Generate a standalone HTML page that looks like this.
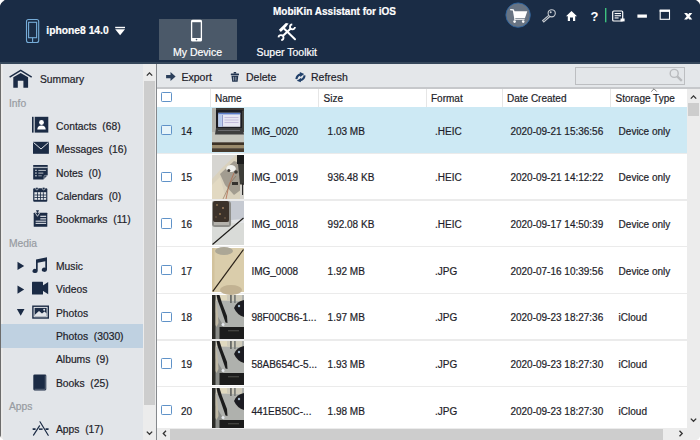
<!DOCTYPE html>
<html><head><meta charset="utf-8">
<style>
*{margin:0;padding:0;box-sizing:border-box}
html,body{width:700px;height:440px;overflow:hidden;background:#fff}
body{font-family:"Liberation Sans",sans-serif;font-size:10px;color:#1e1e2a;position:relative}
.a{position:absolute}
.t{position:absolute;white-space:pre;line-height:1;-webkit-text-stroke:0.2px currentColor}
svg{position:absolute;overflow:visible}
</style></head><body>
<!-- header -->
<div class="a" style="left:0;top:0;width:700px;height:62px;background:#1a2c45"></div>
<div class="a" style="left:0;top:62px;width:700px;height:2px;background:#35475b"></div>
<div class="t" style="left:273px;top:7px;color:#fff;font-weight:bold;font-size:10px">MobiKin Assistant for iOS</div>
<div class="t" style="left:46.3px;top:26.3px;color:#fff;font-weight:bold;font-size:10.3px">iphone8 14.0</div>
<div class="a" style="left:158.7px;top:18.7px;width:78.3px;height:41.3px;background:#4b5969"></div>
<div class="t" style="left:173px;top:47px;color:#fff;font-size:10.5px">My Device</div>
<div class="t" style="left:256.5px;top:47px;color:#fff;font-size:10.5px">Super Toolkit</div>

<!-- sidebar -->
<div class="a" style="left:0;top:64px;width:143px;height:376px;background:#e2e5e9"></div>
<div class="a" style="left:1px;top:64px;width:2px;height:376px;background:#eaeaea"></div>
<div class="a" style="left:0;top:64px;width:1.2px;height:376px;background:#6c6c6c"></div>
<div class="a" style="left:143px;top:64px;width:13px;height:376px;background:#ececec"></div>
<div class="a" style="left:144px;top:81px;width:11px;height:324px;background:#cdcdcd"></div>
<div class="a" style="left:156px;top:64px;width:1.3px;height:376px;background:#85888c"></div>

<div class="t" style="left:40px;top:75.33px;font-size:10.3px">Summary</div>
<div class="t" style="left:9px;top:98.67px;font-size:10.3px;color:#979ba1">Info</div>
<div class="t" style="left:56px;top:122.00px;font-size:10.3px">Contacts  (68)</div>
<div class="t" style="left:56px;top:145.33px;font-size:10.3px">Messages  (16)</div>
<div class="t" style="left:56px;top:168.67px;font-size:10.3px">Notes  (0)</div>
<div class="t" style="left:56px;top:192.00px;font-size:10.3px">Calendars  (0)</div>
<div class="t" style="left:56px;top:215.33px;font-size:10.3px">Bookmarks  (11)</div>
<div class="t" style="left:9px;top:238.66px;font-size:10.3px;color:#979ba1">Media</div>
<div class="t" style="left:56px;top:262.00px;font-size:10.3px">Music</div>
<div class="t" style="left:56px;top:285.33px;font-size:10.3px">Videos</div>
<div class="t" style="left:56px;top:308.66px;font-size:10.3px">Photos</div>
<div class="a" style="left:1.2px;top:323.7px;width:141.8px;height:24px;background:#bfd1e1"></div>
<div class="t" style="left:56px;top:332.00px;font-size:10.3px">Photos  (3030)</div>
<div class="t" style="left:56px;top:355.33px;font-size:10.3px">Albums  (9)</div>
<div class="t" style="left:56px;top:378.66px;font-size:10.3px">Books  (25)</div>
<div class="t" style="left:9px;top:402.00px;font-size:10.3px;color:#979ba1">Apps</div>
<div class="t" style="left:56px;top:425.33px;font-size:10.3px">Apps  (17)</div>

<!-- toolbar -->
<div class="a" style="left:157px;top:64px;width:543px;height:23.5px;background:#e4e7ea"></div>
<div class="a" style="left:157px;top:87px;width:543px;height:1.5px;background:#c6c8cb"></div>
<div class="t" style="left:181.5px;top:71.5px;font-size:10.5px">Export</div>
<div class="t" style="left:246px;top:71.5px;font-size:10.5px">Delete</div>
<div class="t" style="left:311px;top:71.5px;font-size:10.5px">Refresh</div>
<div class="a" style="left:575px;top:66.5px;width:110px;height:18px;border:1px solid #bcbec1;background:#e3e6e9"></div>

<!-- grid -->
<div class="a" style="left:157px;top:88.5px;width:530px;height:339.5px;background:#fff"></div>
<svg width="0" height="0" style="position:absolute"><defs><filter id="bl" x="0" y="0" width="1" height="1"><feGaussianBlur stdDeviation="0.5"/></filter></defs></svg>
<div class="a" style="left:157px;top:107.33px;width:530px;height:45.37px;background:#cde9f4"></div>
<div class="a" style="left:157px;top:152.70px;width:530px;height:1.3px;background:#ebebeb"></div>
<div class="a" style="left:161px;top:124.83px;width:11px;height:10.4px;border:1.3px solid #5f92c8;border-radius:1.3px;background:rgba(255,255,255,0.5)"></div>
<div class="t" style="left:181px;top:126.63px">14</div>
<svg style="left:212px;top:108.13px" width="32" height="44" viewBox="0 0 32 44"><g filter="url(#bl)"><rect width="32" height="44" fill="#5e5d58"/>
<rect x="0" y="0" width="5" height="26" fill="#b2b1aa"/>
<rect x="4" y="0" width="28" height="3" fill="#3a3936"/>
<rect x="4" y="2" width="26.5" height="19" fill="#1e1e22"/>
<rect x="6.3" y="4.8" width="22" height="14" fill="#e6e6f2"/>
<rect x="6.3" y="4.8" width="22" height="1.6" fill="#5a7cc8"/>
<rect x="6.3" y="6.4" width="3.5" height="12.4" fill="#b4c8ec"/>
<rect x="10" y="7" width="0.7" height="11.5" fill="#6a78b8"/>
<rect x="12.5" y="9" width="14" height="1" fill="#c4bcdc"/>
<rect x="12.5" y="11.5" width="14" height="1" fill="#c4bcdc"/>
<rect x="12.5" y="14" width="14" height="1" fill="#c4bcdc"/>
<rect x="30.5" y="3" width="1.5" height="22" fill="#44443f"/>
<rect x="0" y="24" width="32" height="10.5" fill="#c6c6be"/>
<polygon points="4,20 30.5,20 32,26.5 3,26.5" fill="#3c3c3e"/>
<rect x="6" y="22" width="22" height="1" fill="#6a6a6e"/>
<rect x="0" y="34.5" width="32" height="2.5" fill="#3d3228"/>
<rect x="0" y="37" width="32" height="3.5" fill="#9a8a6c"/>
<rect x="0" y="40.5" width="32" height="3.5" fill="#463a2e"/></g></svg>
<div class="t" style="left:251.4px;top:126.63px">IMG_0020</div>
<div class="t" style="left:327.6px;top:126.63px">1.03 MB</div>
<div class="t" style="left:435px;top:126.63px">.HEIC</div>
<div class="t" style="left:510.4px;top:126.63px">2020-09-21 15:36:56</div>
<div class="t" style="left:618.6px;top:126.63px">Device only</div>
<div class="a" style="left:157px;top:199.37px;width:530px;height:1.3px;background:#ebebeb"></div>
<div class="a" style="left:161px;top:171.50px;width:11px;height:10.4px;border:1.3px solid #5f92c8;border-radius:1.3px;background:rgba(255,255,255,0.5)"></div>
<div class="t" style="left:181px;top:173.30px">15</div>
<svg style="left:212px;top:154.80px" width="32" height="44" viewBox="0 0 32 44"><g filter="url(#bl)"><rect width="32" height="44" fill="#d9d1bd"/>
<polygon points="0,0 24,0 10,13 0,24" fill="#d6d5d1"/>
<polygon points="8,19 22,6 28,8 30,34 22,40 13,30" fill="#a29c90"/>
<polygon points="0,30 8,22 14,44 0,44" fill="#e2d9c2"/>
<ellipse cx="19" cy="13.5" rx="4.8" ry="3.6" fill="#f1f1ed"/>
<circle cx="16.8" cy="15.5" r="1.5" fill="#3c3834"/>
<circle cx="24" cy="17" r="1.8" fill="#403c38"/>
<rect x="25" y="0" width="7" height="9" fill="#1e1d1c"/>
<polygon points="26,9 32,9 32,30 28,29" fill="#3e3c39"/>
<rect x="28" y="30" width="4" height="14" fill="#d6d4ce"/>
<rect x="30" y="28" width="1.1" height="12" fill="#2a2a2a"/>
<rect x="20" y="27" width="6" height="3" fill="#34322f"/>
<path d="M14,44 L17,30 L22,18" stroke="#b46a4e" stroke-width="0.8" fill="none"/>
<path d="M11,44 L19,27 L24,21" stroke="#8a6a50" stroke-width="0.6" fill="none"/></g></svg>
<div class="t" style="left:251.4px;top:173.30px">IMG_0019</div>
<div class="t" style="left:327.6px;top:173.30px">936.48 KB</div>
<div class="t" style="left:435px;top:173.30px">.HEIC</div>
<div class="t" style="left:510.4px;top:173.30px">2020-09-21 14:12:22</div>
<div class="t" style="left:618.6px;top:173.30px">Device only</div>
<div class="a" style="left:157px;top:246.03px;width:530px;height:1.3px;background:#ebebeb"></div>
<div class="a" style="left:161px;top:218.17px;width:11px;height:10.4px;border:1.3px solid #5f92c8;border-radius:1.3px;background:rgba(255,255,255,0.5)"></div>
<div class="t" style="left:181px;top:219.97px">16</div>
<svg style="left:212px;top:201.47px" width="32" height="44" viewBox="0 0 32 44"><g filter="url(#bl)"><rect width="32" height="44" fill="#d9dbd8"/>
<rect x="16" y="0" width="16" height="21" fill="#c6cad2"/>
<rect x="0" y="0" width="19" height="26" rx="3" fill="#8e8e8a"/>
<rect x="1" y="0" width="16" height="21" rx="2" fill="#3a3029"/>
<circle cx="5" cy="4" r="1" fill="#8a7050"/><circle cx="11" cy="7" r="1" fill="#a08060"/><circle cx="8" cy="13" r="1" fill="#9a7a58"/><circle cx="13" cy="17" r="0.8" fill="#8a7050"/><circle cx="4" cy="16" r="0.8" fill="#7a6048"/>
<rect x="2" y="21" width="15" height="3" fill="#b4b2ac"/>
<polygon points="19,19 32,18 32,22 20,22" fill="#e2e4e6"/>
<line x1="0.5" y1="43.5" x2="31.5" y2="17" stroke="#1a1816" stroke-width="1.1"/></g></svg>
<div class="t" style="left:251.4px;top:219.97px">IMG_0018</div>
<div class="t" style="left:327.6px;top:219.97px">992.08 KB</div>
<div class="t" style="left:435px;top:219.97px">.HEIC</div>
<div class="t" style="left:510.4px;top:219.97px">2020-09-17 14:50:39</div>
<div class="t" style="left:618.6px;top:219.97px">Device only</div>
<div class="a" style="left:157px;top:292.70px;width:530px;height:1.3px;background:#ebebeb"></div>
<div class="a" style="left:161px;top:264.83px;width:11px;height:10.4px;border:1.3px solid #5f92c8;border-radius:1.3px;background:rgba(255,255,255,0.5)"></div>
<div class="t" style="left:181px;top:266.63px">17</div>
<svg style="left:212px;top:248.13px" width="32" height="44" viewBox="0 0 32 44"><g filter="url(#bl)"><rect width="32" height="44" fill="#dacdab"/>
<ellipse cx="12" cy="3" rx="9" ry="4" fill="#aca796"/>
<ellipse cx="19" cy="42" rx="11" ry="5" fill="#c2b292"/>
<rect x="0" y="0" width="2.5" height="44" fill="#d2c29c"/>
<line x1="0.8" y1="43.3" x2="31.5" y2="1.5" stroke="#2a2218" stroke-width="1.2"/></g></svg>
<div class="t" style="left:251.4px;top:266.63px">IMG_0008</div>
<div class="t" style="left:327.6px;top:266.63px">1.92 MB</div>
<div class="t" style="left:435px;top:266.63px">.JPG</div>
<div class="t" style="left:510.4px;top:266.63px">2020-07-16 10:39:56</div>
<div class="t" style="left:618.6px;top:266.63px">Device only</div>
<div class="a" style="left:157px;top:339.37px;width:530px;height:1.3px;background:#ebebeb"></div>
<div class="a" style="left:161px;top:311.50px;width:11px;height:10.4px;border:1.3px solid #5f92c8;border-radius:1.3px;background:rgba(255,255,255,0.5)"></div>
<div class="t" style="left:181px;top:313.30px">18</div>
<svg style="left:212px;top:294.80px" width="32" height="44" viewBox="0 0 32 44"><g filter="url(#bl)"><rect width="32" height="44" fill="#afb1ad"/>
<polygon points="0,12 11,30 9,44 0,44" fill="#8a8c88"/>
<rect x="4" y="0" width="26" height="6" fill="#cfcbbb"/>
<rect x="7" y="0" width="8" height="5" fill="#e0d9bf"/>
<rect x="18" y="0" width="1.8" height="8" fill="#6a6c68"/>
<rect x="22" y="0" width="1.8" height="8" fill="#7e807c"/>
<rect x="0" y="0" width="3.5" height="44" fill="#2a2a28"/>
<polygon points="3.5,4 5.5,14 6.5,28 4.5,32 3.5,30" fill="#c0b9a4"/>
<polygon points="4.5,0 7.5,0 10,8 15,21 15.5,28 13.5,27.5 8.5,13 5.5,5" fill="#1e1e1e"/>
<path d="M22,13 Q25,6 32,5 L32,22 Q25,20 22,13 Z" fill="#1e1e20"/>
<circle cx="27" cy="11" r="1.2" fill="#a4b8cc"/>
<rect x="7.5" y="32" width="24.5" height="12" fill="#1c1c1a"/>
<rect x="16" y="35" width="11" height="1.4" fill="#42423f"/>
<circle cx="11" cy="29.5" r="1.5" fill="#e6e9ee"/></g></svg>
<div class="t" style="left:251.4px;top:313.30px">98F00CB6-1...</div>
<div class="t" style="left:327.6px;top:313.30px">1.97 MB</div>
<div class="t" style="left:435px;top:313.30px">.JPG</div>
<div class="t" style="left:510.4px;top:313.30px">2020-09-23 18:27:36</div>
<div class="t" style="left:618.6px;top:313.30px">iCloud</div>
<div class="a" style="left:157px;top:386.03px;width:530px;height:1.3px;background:#ebebeb"></div>
<div class="a" style="left:161px;top:358.17px;width:11px;height:10.4px;border:1.3px solid #5f92c8;border-radius:1.3px;background:rgba(255,255,255,0.5)"></div>
<div class="t" style="left:181px;top:359.97px">19</div>
<svg style="left:212px;top:341.47px" width="32" height="44" viewBox="0 0 32 44"><g filter="url(#bl)"><rect width="32" height="44" fill="#afb1ad"/>
<polygon points="0,12 11,30 9,44 0,44" fill="#8a8c88"/>
<rect x="4" y="0" width="26" height="6" fill="#cfcbbb"/>
<rect x="7" y="0" width="8" height="5" fill="#e0d9bf"/>
<rect x="18" y="0" width="1.8" height="8" fill="#6a6c68"/>
<rect x="22" y="0" width="1.8" height="8" fill="#7e807c"/>
<rect x="0" y="0" width="3.5" height="44" fill="#2a2a28"/>
<polygon points="3.5,4 5.5,14 6.5,28 4.5,32 3.5,30" fill="#c0b9a4"/>
<polygon points="4.5,0 7.5,0 10,8 15,21 15.5,28 13.5,27.5 8.5,13 5.5,5" fill="#1e1e1e"/>
<path d="M22,13 Q25,6 32,5 L32,22 Q25,20 22,13 Z" fill="#1e1e20"/>
<circle cx="27" cy="11" r="1.2" fill="#a4b8cc"/>
<rect x="7.5" y="32" width="24.5" height="12" fill="#1c1c1a"/>
<rect x="16" y="35" width="11" height="1.4" fill="#42423f"/>
<circle cx="11" cy="29.5" r="1.5" fill="#e6e9ee"/></g></svg>
<div class="t" style="left:251.4px;top:359.97px">58AB654C-5...</div>
<div class="t" style="left:327.6px;top:359.97px">1.93 MB</div>
<div class="t" style="left:435px;top:359.97px">.JPG</div>
<div class="t" style="left:510.4px;top:359.97px">2020-09-23 18:27:30</div>
<div class="t" style="left:618.6px;top:359.97px">iCloud</div>
<div class="a" style="left:157px;top:432.70px;width:530px;height:1.3px;background:#ebebeb"></div>
<div class="a" style="left:161px;top:404.83px;width:11px;height:10.4px;border:1.3px solid #5f92c8;border-radius:1.3px;background:rgba(255,255,255,0.5)"></div>
<div class="t" style="left:181px;top:406.63px">20</div>
<svg style="left:212px;top:388.13px" width="32" height="44" viewBox="0 0 32 44"><g filter="url(#bl)"><rect width="32" height="44" fill="#afb1ad"/>
<polygon points="0,12 11,30 9,44 0,44" fill="#8a8c88"/>
<rect x="4" y="0" width="26" height="6" fill="#cfcbbb"/>
<rect x="7" y="0" width="8" height="5" fill="#e0d9bf"/>
<rect x="18" y="0" width="1.8" height="8" fill="#6a6c68"/>
<rect x="22" y="0" width="1.8" height="8" fill="#7e807c"/>
<rect x="0" y="0" width="3.5" height="44" fill="#2a2a28"/>
<polygon points="3.5,4 5.5,14 6.5,28 4.5,32 3.5,30" fill="#c0b9a4"/>
<polygon points="4.5,0 7.5,0 10,8 15,21 15.5,28 13.5,27.5 8.5,13 5.5,5" fill="#1e1e1e"/>
<path d="M22,13 Q25,6 32,5 L32,22 Q25,20 22,13 Z" fill="#1e1e20"/>
<circle cx="27" cy="11" r="1.2" fill="#a4b8cc"/>
<rect x="7.5" y="32" width="24.5" height="12" fill="#1c1c1a"/>
<rect x="16" y="35" width="11" height="1.4" fill="#42423f"/>
<circle cx="11" cy="29.5" r="1.5" fill="#e6e9ee"/></g></svg>
<div class="t" style="left:251.4px;top:406.63px">441EB50C-...</div>
<div class="t" style="left:327.6px;top:406.63px">1.98 MB</div>
<div class="t" style="left:435px;top:406.63px">.JPG</div>
<div class="t" style="left:510.4px;top:406.63px">2020-09-23 18:27:30</div>
<div class="t" style="left:618.6px;top:406.63px">iCloud</div>
<div class="a" style="left:161px;top:91.8px;width:11px;height:10.4px;border:1.3px solid #5f92c8;border-radius:1.3px"></div>
<div class="a" style="left:210px;top:88.5px;width:1px;height:18.5px;background:#e6e6e6"></div>
<div class="a" style="left:318px;top:88.5px;width:1px;height:18.5px;background:#e6e6e6"></div>
<div class="a" style="left:426px;top:88.5px;width:1px;height:18.5px;background:#e6e6e6"></div>
<div class="a" style="left:502px;top:88.5px;width:1px;height:18.5px;background:#e6e6e6"></div>
<div class="a" style="left:610px;top:88.5px;width:1px;height:18.5px;background:#e6e6e6"></div>
<div class="t" style="left:215px;top:93.8px;font-size:10px">Name</div>
<div class="t" style="left:323.5px;top:93.8px;font-size:10px">Size</div>
<div class="t" style="left:431px;top:93.8px;font-size:10px">Format</div>
<div class="t" style="left:507px;top:93.8px;font-size:10px">Date Created</div>
<div class="t" style="left:615.5px;top:93.8px;font-size:10px">Storage Type</div>

<!-- scrollbars -->
<div class="a" style="left:687px;top:88.5px;width:13px;height:351.5px;background:#ececec"></div>
<div class="a" style="left:688px;top:103px;width:11px;height:13px;background:#cdcdcd"></div>
<div class="a" style="left:157px;top:428px;width:530px;height:12px;background:#ececec"></div>
<div class="a" style="left:170px;top:429px;width:493px;height:11px;background:#cdcdcd"></div>
<svg width="700" height="440" viewBox="0 0 700 440" style="left:0;top:0;position:absolute">
<!-- device phone -->
<g fill="none" stroke="#76acd8" stroke-width="1.1">
<rect x="26.5" y="19.5" width="12.2" height="23" rx="2"/>
<rect x="28.6" y="22.3" width="8" height="15.4"/>
<line x1="32.6" y1="37.8" x2="32.6" y2="42"/>
</g>
<!-- dropdown triangle -->
<rect x="115.2" y="26.8" width="9.8" height="1.4" fill="#fff"/>
<polygon points="115.2,29.2 125,29.2 120.1,35.3" fill="#fff"/>
<!-- white phone tab -->
<rect x="191.6" y="20.5" width="9.8" height="20.4" rx="1" fill="none" stroke="#fff" stroke-width="1.3"/>
<rect x="191.6" y="20.5" width="9.8" height="1.7" fill="#fff"/>
<rect x="191.6" y="38" width="9.8" height="3" fill="#fff"/>
<circle cx="196.5" cy="39.6" r="0.8" fill="#4b5969"/>
<!-- tools -->
<g stroke="#fff" fill="none" stroke-width="2">
<line x1="284.5" y1="29" x2="295" y2="39.2" stroke-linecap="round"/>
<line x1="283" y1="35.8" x2="290.8" y2="28.4"/>
<path d="M294.99,27.02 A2.5,2.5 0 1 1 292.28,24.31" stroke-width="1.8"/>
<path d="M278.51,37.38 A2.5,2.5 0 1 1 281.22,40.09" stroke-width="1.8"/>
</g>
<polygon points="288.6,23.6 285.8,22.9 278.9,29.8 280.8,32.1 284,29 286.5,26.2" fill="#fff"/>
<!-- cart -->
<circle cx="518.1" cy="15.1" r="12.2" fill="#687483" stroke="#2c64a0" stroke-width="0.9"/>
<g fill="#fff">
<path d="M510.2,9.1 L513.6,9.3 L514.6,11.2 L527.3,11.2 L524.9,18.2 L515.3,18.2 L515.3,19.3 L524.6,19.3 L524.6,20.1 L514.3,20.1 L514.2,18.2 L512.8,10.4 L510.2,10.3 Z"/>
<circle cx="514.6" cy="21.6" r="1.3"/>
<circle cx="523.2" cy="21.6" r="1.3"/>
</g>
<!-- key -->
<g fill="none" stroke="#c9cdd2" stroke-width="1.1">
<circle cx="551.7" cy="13.3" r="3.6"/>
<path d="M548.7,15.3 L542.6,20.6 L543.8,22 L549.9,16.5"/>
</g>
<circle cx="550.7" cy="12.3" r="1" fill="#c9cdd2"/>
<!-- home -->
<g fill="#fff">
<polygon points="571.5,10.9 577,16.2 575.2,16.2 575.2,20.9 573,20.9 573,17.6 570,17.6 570,20.9 567.8,20.9 567.8,16.2 566,16.2"/>
</g>
<!-- ? -->
<text x="590.6" y="21.4" font-family="Liberation Sans" font-weight="bold" font-size="13" fill="#fff">?</text>
<!-- green sep -->
<rect x="605" y="8" width="1.4" height="14.3" fill="#3ec27f"/>
<!-- note icon -->
<g fill="none" stroke="#fff" stroke-width="1.2">
<rect x="612.7" y="11" width="10" height="10" rx="1"/>
</g>
<g fill="#fff">
<rect x="614.6" y="13" width="6.4" height="1.1"/>
<rect x="614.6" y="15.2" width="6.4" height="1.1"/>
<rect x="614.6" y="17.4" width="4" height="1.1"/>
<polygon points="620.5,18.5 624.6,18.5 624.6,21.4 620.5,21.4" />
</g>
<!-- minimize -->
<rect x="637.4" y="14.5" width="9.5" height="3.2" fill="#fff"/>
<!-- maximize -->
<rect x="660.2" y="10.3" width="9.3" height="9" fill="none" stroke="#fff" stroke-width="1.1"/>
<rect x="659.7" y="9.7" width="10.3" height="2.2" fill="#fff"/>
<!-- X -->
<path d="M684.1,13.1 L687.1,13.1 L692.3,19.6 L689.3,19.6 Z M689.3,13.1 L692.3,13.1 L687.1,19.6 L684.1,19.6 Z" fill="#fff"/>

<!-- sidebar icons -->
<g fill="#1b2b45">
<!-- home summary -->
<path d="M9.2,76.4 L20.7,69.5 L32.1,76.4 L31.3,77.7 L20.7,71.2 L10,77.7 Z"/>
<path d="M13.3,77.2 L20.7,72.9 L28.1,77.2 L28.1,87.8 L23.4,87.8 L23.4,80.8 L17.8,80.8 L17.8,87.8 L13.3,87.8 Z"/>
<!-- contacts -->
<rect x="32" y="116.8" width="1.6" height="15.8"/>
<rect x="34.7" y="116.8" width="13.6" height="15.8"/>
<!-- messages -->
<rect x="33" y="141.8" width="15.9" height="12"/>
<!-- notes -->
<path d="M33.2,164.9 L47.7,164.9 L47.7,175 L43.3,179.4 L33.2,179.4 Z"/>
<!-- calendar -->
<rect x="33.2" y="188.2" width="14.1" height="13.5" rx="1"/>
<!-- bookmarks -->
<rect x="33.7" y="212.7" width="13.6" height="14.1" rx="0.5"/>
<!-- music -->
<path d="M36,259.5 L47,257.3 L47,269.8 A2.6,2.1 0 1 1 45.3,267.8 L45.3,261.2 L37.7,262.8 L37.7,271 A2.6,2.1 0 1 1 36,269 Z"/>
<!-- video -->
<rect x="32" y="281.8" width="11" height="12.7" rx="0.5"/>
<polygon points="42,286 48.2,282 48.2,294.3 42,290.3"/>
<!-- photos -->
<rect x="32.2" y="305.5" width="16.8" height="13.2"/>
<!-- book -->
<rect x="33.3" y="374.4" width="13" height="16" rx="1.3"/>
<!-- arrows -->
<polygon points="17.5,261.8 24.2,265.9 17.5,270"/>
<polygon points="17.5,285.5 24.2,289.6 17.5,293.7"/>
<polygon points="16.9,309 24.5,309 20.7,315.8"/>
</g>
<g fill="#fff">
<circle cx="41.5" cy="122.5" r="2.4"/>
<path d="M37.3,129.5 Q37.5,125.6 41.5,125.6 Q45.5,125.6 45.7,129.5 Z"/>
</g>
<path d="M33.5,142.5 L41,149 L48.4,142.5" fill="none" stroke="#e2e5e9" stroke-width="1"/>
<!-- notes details -->
<g fill="#e2e5e9">
<rect x="33.2" y="166.8" width="14.5" height="1.3" opacity="0.75"/>
<rect x="35.3" y="169.7" width="1.3" height="1.3"/>
<rect x="35.3" y="172.4" width="1.3" height="1.3"/>
<rect x="35.3" y="175.1" width="1.3" height="1.3"/>
<rect x="38.3" y="169.9" width="7.6" height="1" opacity="0.8"/>
<rect x="38.3" y="172.6" width="5" height="1" opacity="0.8"/>
<rect x="38.3" y="175.3" width="3.5" height="1" opacity="0.6"/>
</g>
<path d="M47.2,175.4 L44,178.8 L44,176.6 Q44,175.4 45.2,175.4 Z" fill="#1b2b45" stroke="#c0c6ce" stroke-width="0.6"/>
<!-- calendar details -->
<rect x="34.4" y="192.2" width="11.8" height="7.6" fill="#e2e5e9"/>
<g fill="#1b2b45">
<rect x="37.1" y="192.2" width="0.8" height="7.6"/><rect x="40" y="192.2" width="0.8" height="7.6"/><rect x="42.9" y="192.2" width="0.8" height="7.6"/>
<rect x="34.4" y="194.6" width="11.8" height="0.8"/><rect x="34.4" y="197.1" width="11.8" height="0.8"/>
</g>
<g fill="#1b2b45" stroke="#e2e5e9" stroke-width="0.6"><circle cx="36.9" cy="188.6" r="1.3"/><circle cx="43.7" cy="188.6" r="1.3"/></g>
<!-- bookmark details -->
<polygon points="35.9,210.3 39.1,210.3 37.5,213.2" fill="#1b2b45"/>
<path d="M35.3,212.9 L37.5,216.3 L39.7,212.9" fill="none" stroke="#e2e5e9" stroke-width="0.8"/>
<g fill="#c9ced6">
<rect x="40.3" y="215.7" width="5.8" height="1.3"/>
<rect x="40.3" y="218.2" width="5.8" height="1.3"/>
<rect x="35.6" y="220.6" width="10.5" height="1.2"/>
<rect x="35.6" y="222.8" width="10.5" height="1.2"/>
</g>
<!-- photo details -->
<rect x="33.6" y="306.9" width="14" height="10.4" fill="#e2e5e9"/>
<rect x="34.6" y="307.9" width="12" height="8.4" fill="#1b2b45"/>
<path d="M34.6,315 L39,311 L42,313.5 L44.5,311.5 L46.6,313.5 L46.6,316.3 L34.6,316.3 Z" fill="#e2e5e9"/>
<circle cx="44.2" cy="309.7" r="1" fill="#e2e5e9"/>
<!-- book edge -->
<path d="M45.3,375.5 L45.3,389.3 L34.5,389.3" fill="none" stroke="#6a7584" stroke-width="0.8"/>
<!-- apps A -->
<g fill="none" stroke="#1b2b45" stroke-width="1.2" stroke-linecap="round">
<line x1="40" y1="421.8" x2="48.2" y2="435.3"/>
<line x1="39.5" y1="425.8" x2="33.5" y2="435.1"/>
</g>
<g fill="#1b2b45">
<rect x="32.4" y="428.2" width="3.4" height="1.7" rx="0.8"/>
<rect x="39" y="428.4" width="3.6" height="1.5"/>
<rect x="45.3" y="428.2" width="3.5" height="1.7" rx="0.8"/>
</g>
<!-- toolbar icons -->
<path d="M166.1,75 L170.5,75 L170.5,71.9 L175.6,76.5 L170.5,81 L170.5,78.2 L166.1,78.2 Z" fill="#2b3f5b"/>
<g fill="#22344f">
<rect x="230.8" y="73.6" width="8.2" height="1.6" rx="0.5"/>
<rect x="233.6" y="72.1" width="2.6" height="1.4" rx="0.5"/>
<path d="M231.5,75.8 L238.3,75.8 L237.6,81.7 L232.2,81.7 Z"/>
</g>
<g fill="#b9c0c8"><rect x="233.3" y="76.8" width="0.8" height="3.8"/><rect x="235.5" y="76.8" width="0.8" height="3.8"/></g>
<g fill="none" stroke="#21406a" stroke-width="2.1">
<path d="M296.4,79.2 Q296.9,75.2 300.6,74.4"/>
<path d="M304.6,75.4 Q304.1,79.4 300.4,80.2"/>
</g>
<g fill="#21406a">
<polygon points="299.8,71.9 304.2,73.9 300.2,76.9"/>
<polygon points="301.2,77.7 296.8,80.7 300.8,82.3"/>
</g>
<!-- search icon -->
<g fill="none" stroke="#b8babd" stroke-width="1.4">
<circle cx="674.2" cy="73.4" r="4"/>
<line x1="677.2" y1="76.4" x2="681.8" y2="80.8" stroke-width="2.3"/>
</g>
<!-- sidebar scroll arrows -->
<path d="M146.8,75.6 L149.5,72.9 L152.2,75.6" fill="none" stroke="#333" stroke-width="1.3"/>
<path d="M146.8,431.6 L149.5,434.3 L152.2,431.6" fill="none" stroke="#333" stroke-width="1.3"/>
<path d="M690.8,98.6 L693.5,95.9 L696.2,98.6" fill="none" stroke="#333" stroke-width="1.3"/>
<path d="M690.8,418.6 L693.5,421.3 L696.2,418.6" fill="none" stroke="#333" stroke-width="1.3"/>
<path d="M166,430.8 L163.3,433.5 L166,436.2" fill="none" stroke="#333" stroke-width="1.3"/>
<path d="M679.5,430.8 L682.2,433.5 L679.5,436.2" fill="none" stroke="#333" stroke-width="1.3"/>
<!-- sort caret -->
<path d="M651.2,91.6 L654,88.8 L656.8,91.6" fill="none" stroke="#555" stroke-width="0.8"/>
<!-- corners -->
<path d="M0,0 L5,0 Q1.6,2 0,6 Z" fill="#fff"/>
<path d="M5,0 Q1.6,2 0,6" fill="none" stroke="#0e1a2c" stroke-width="0.8" opacity="0.6"/>
<path d="M695.6,0 L700,0 L700,4.8 Q698.8,1.5 695.6,0 Z" fill="#fff"/>
<path d="M695.6,0 Q698.8,1.5 700,4.8" fill="none" stroke="#0e1a2c" stroke-width="0.8" opacity="0.6"/>
<path d="M0,435.5 Q0.8,439 3.5,440 L0,440 Z" fill="#fff"/>
<path d="M700,436.5 Q699.2,439.2 696.5,440 L700,440 Z" fill="#fff"/>
</svg>

</body></html>
